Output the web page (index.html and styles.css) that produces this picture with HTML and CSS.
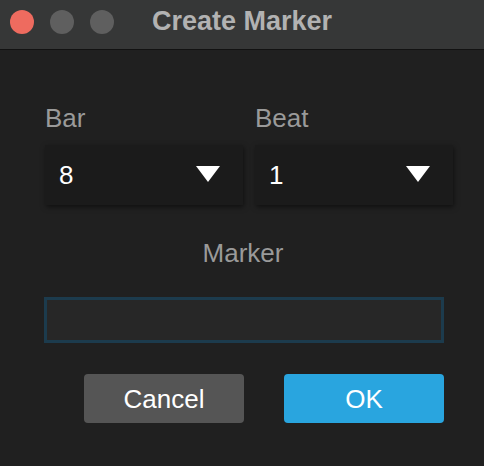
FILE: index.html
```html
<!DOCTYPE html>
<html>
<head>
<meta charset="utf-8">
<link rel="stylesheet" href="styles.css">
</head>
<body>
<div class="window">
  <div class="titlebar">
    <div class="lights">
      <span class="light red"></span>
      <span class="light gray"></span>
      <span class="light gray"></span>
    </div>
    <div class="title">Create Marker</div>
  </div>
  <div class="content">
    <div class="fields">
      <div class="field">
        <div class="label">Bar</div>
        <div class="select"><span class="value">8</span><span class="arrow"></span></div>
      </div>
      <div class="field">
        <div class="label">Beat</div>
        <div class="select"><span class="value">1</span><span class="arrow"></span></div>
      </div>
    </div>
    <div class="marker-label">Marker</div>
    <div class="input"></div>
    <div class="buttons">
      <div class="btn cancel">Cancel</div>
      <div class="btn ok">OK</div>
    </div>
  </div>
</div>
</body>
</html>
```
FILE: styles.css
```css
html, body {
  margin: 0;
  padding: 0;
  background: #202020;
}
body {
  width: 484px;
  height: 466px;
  overflow: hidden;
  font-family: "Liberation Sans", sans-serif;
}
.window {
  width: 484px;
  height: 466px;
  background: #202020;
}
.titlebar {
  height: 49px;
  background: #363737;
  border-bottom: 1px solid #121212;
  display: flex;
  align-items: flex-start;
}
.lights {
  display: flex;
  gap: 16px;
  padding-left: 10px;
  padding-top: 10px;
}
.light {
  width: 24px;
  height: 24px;
  border-radius: 50%;
  display: block;
}
.red { background: #ee6b5f; }
.gray { background: #5f5f5f; }
.title {
  margin-left: 38px;
  margin-top: 6px;
  font-weight: bold;
  font-size: 27px;
  line-height: 31px;
  color: #b2b2b2;
}
.content {
  padding: 53px 0 0 44px;
}
.fields {
  display: flex;
  gap: 12px;
  padding-left: 1px;
}
.field {
  width: 198px;
}
.label {
  font-size: 26px;
  color: #9a9a9a;
  line-height: 30px;
  height: 30px;
}
.select {
  margin-top: 12px;
  height: 60px;
  background: #1b1b1b;
  box-shadow: 1px 2px 5px rgba(0,0,0,0.5);
  display: flex;
  align-items: center;
  justify-content: space-between;
  padding: 0 23px 0 14px;
}
.value {
  font-size: 26px;
  color: #ffffff;
}
.arrow {
  width: 0;
  height: 0;
  border-left: 12px solid transparent;
  border-right: 12px solid transparent;
  border-top: 16px solid #ffffff;
  margin-top: -2px;
}
.marker-label {
  margin-top: 33px;
  text-align: center;
  font-size: 26px;
  color: #9a9a9a;
  line-height: 30px;
  width: 398px;
}
.input {
  margin-top: 29px;
  width: 394px;
  height: 40px;
  background: #272727;
  border: 3px solid #1c3b4d;
}
.buttons {
  margin-top: 31px;
  display: flex;
  gap: 40px;
  padding-left: 40px;
}
.btn {
  width: 160px;
  height: 49px;
  border-radius: 4px;
  display: flex;
  align-items: center;
  justify-content: center;
  font-size: 26px;
  color: #ffffff;
  padding-top: 2px;
  box-sizing: border-box;
}
.cancel { background: #555555; }
.ok { background: #29a5df; }
```
